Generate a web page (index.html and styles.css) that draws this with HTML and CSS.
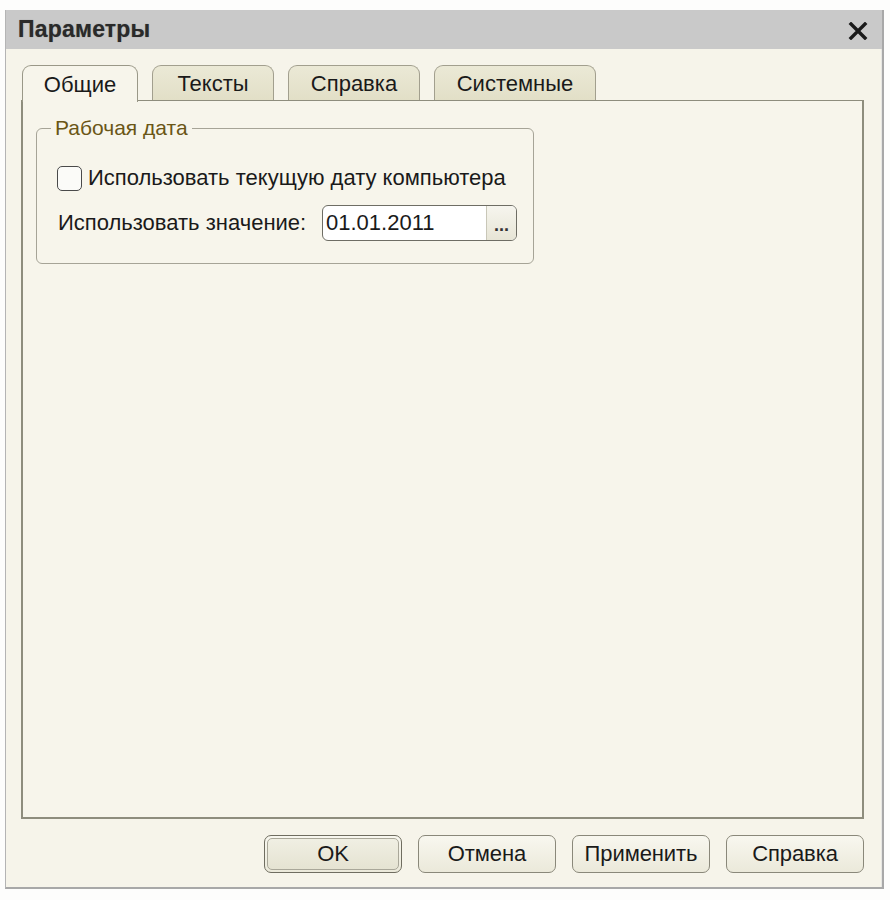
FILE: index.html
```html
<!DOCTYPE html>
<html lang="ru">
<head>
<meta charset="utf-8">
<title>Параметры</title>
<link rel="stylesheet" href="styles.css">
</head>
<body>
<div class="window">
  <div class="titlebar">
    <span class="title">Параметры</span>
    <span class="close">
      <svg width="20" height="18" viewBox="0 0 20 18"><path d="M3 2 L17 16 M17 2 L3 16" stroke="#1a1a1a" stroke-width="3.4" stroke-linecap="square"/></svg>
    </span>
  </div>
  <div class="body">
    <div class="tabs">
      <div class="tab active t1">Общие</div>
      <div class="tab t2">Тексты</div>
      <div class="tab t3">Справка</div>
      <div class="tab t4">Системные</div>
    </div>
    <div class="panel">
      <fieldset class="group">
        <legend class="legend">Рабочая дата</legend>
        <div class="row check-row">
          <span class="checkbox"></span>
          <span class="label">Использовать текущую дату компьютера</span>
        </div>
        <div class="row value-row">
          <span class="label">Использовать значение:</span>
          <div class="input">
            <span class="input-text">01.01.2011</span>
            <span class="input-btn">...</span>
          </div>
        </div>
      </fieldset>
    </div>
    <div class="buttons">
      <div class="btn default"><span>OK</span></div>
      <div class="btn">Отмена</div>
      <div class="btn">Применить</div>
      <div class="btn">Справка</div>
    </div>
  </div>
</div>
</body>
</html>
```
FILE: styles.css
```css
html, body {
  margin: 0;
  padding: 0;
  background: #fdfdfc;
}
body {
  font-family: "Liberation Sans", Arial, sans-serif;
  color: #1a1a1a;
}
.window {
  margin: 10px 0 0 5px;
  width: 876px;
  height: 877px;
  border-left: 1px solid #b4b4b4;
  border-right: 2px solid #a8a8a8;
  border-bottom: 2px solid #a8a8a8;
  display: flex;
  flex-direction: column;
  background: #f6f4ea;
}
.titlebar {
  height: 39px;
  background: #c9c9c9;
  display: flex;
  align-items: center;
  justify-content: space-between;
  padding: 0 14px 0 12px;
  flex: none;
}
.title {
  font-weight: bold;
  font-size: 23px;
  letter-spacing: 0.2px;
  color: #2a2a2a;
  text-shadow: 0 0 1px rgba(0,0,0,0.4);
}
.close {
  display: flex;
  align-items: center;
  margin-top: 2px;
}
.body {
  flex: 1;
  border-right: 1px solid #e6e6e2;
  padding: 16px 13px 0 15px;
  display: flex;
  flex-direction: column;
}
.tabs {
  display: flex;
  gap: 14px;
  height: 35px;
  padding-left: 1px;
  position: relative;
  z-index: 1;
}
.tab {
  box-sizing: border-box;
  height: 35px;
  border: 1px solid #a29f8e;
  border-bottom: none;
  border-radius: 9px 9px 0 0;
  background: linear-gradient(#ebe9d6, #e2dfc7);
  font-size: 22px;
  display: flex;
  align-items: center;
  justify-content: center;
  padding-top: 2px;
  color: #1a1a1a;
}
.tab.active {
  background: #f7f5eb;
  height: 37px;
  border-color: #9a9888;
}
.t1 { width: 116px; }
.t2 { width: 122px; }
.t3 { width: 132px; }
.t4 { width: 162px; }
.panel {
  box-sizing: border-box;
  height: 719px;
  width: 843px;
  border: 2px solid #8e8d7d;
  border-top-width: 1px;
  background: #f7f5eb;
  padding: 16px 0 0 13px;
}
.group {
  box-sizing: border-box;
  width: 498px;
  height: 147px;
  margin: 0;
  padding: 10px 0 0 20px;
  border: 1px solid #a6a497;
  border-radius: 6px;
}
.legend {
  font-size: 21px;
  color: #6a5616;
  padding: 0 4px;
  margin-left: -6px;
  line-height: 22px;
}
.row {
  display: flex;
  align-items: center;
}
.check-row {
  height: 26px;
  margin-top: 16px;
}
.checkbox {
  box-sizing: border-box;
  width: 25px;
  height: 25px;
  border: 1px solid #4a4a4a;
  border-radius: 5px;
  background: #fbfbf8;
  margin-right: 6px;
}
.label {
  font-size: 22px;
  color: #1a1a1a;
}
.value-row {
  margin-top: 14px;
  padding-left: 1px;
}
.value-row .label {
  width: 264px;
}
.input {
  box-sizing: border-box;
  width: 195px;
  height: 36px;
  border: 1px solid #6e6d64;
  border-radius: 6px;
  background: #fff;
  display: flex;
  overflow: hidden;
}
.input-text {
  flex: 1;
  font-size: 22px;
  padding-left: 3px;
  display: flex;
  align-items: center;
  color: #1a1a1a;
}
.input-btn {
  width: 30px;
  border-left: 1px solid #c9c7b8;
  background: linear-gradient(#f6f5ee, #e7e5d6);
  font-size: 18px;
  font-weight: bold;
  color: #333;
  display: flex;
  align-items: flex-end;
  justify-content: center;
  padding-bottom: 4px;
  box-sizing: border-box;
}
.buttons {
  display: flex;
  justify-content: flex-end;
  gap: 16px;
  margin-top: 16px;
  width: 843px;
}
.btn {
  box-sizing: border-box;
  width: 138px;
  height: 38px;
  border: 1px solid #8a887a;
  border-radius: 7px;
  background: linear-gradient(#f8f7ef, #ebe9da);
  font-size: 22px;
  letter-spacing: -0.1px;
  display: flex;
  align-items: center;
  justify-content: center;
  color: #1a1a1a;
}
.btn.default {
  padding: 2px;
  border-color: #6f6d60;
}
.btn.default span {
  box-sizing: border-box;
  width: 100%;
  height: 100%;
  border: 1px solid #a9a799;
  border-radius: 5px;
  display: flex;
  align-items: center;
  justify-content: center;
  background: linear-gradient(#f0efe3, #e5e3d2);
  font-size: 22px;
}
```
